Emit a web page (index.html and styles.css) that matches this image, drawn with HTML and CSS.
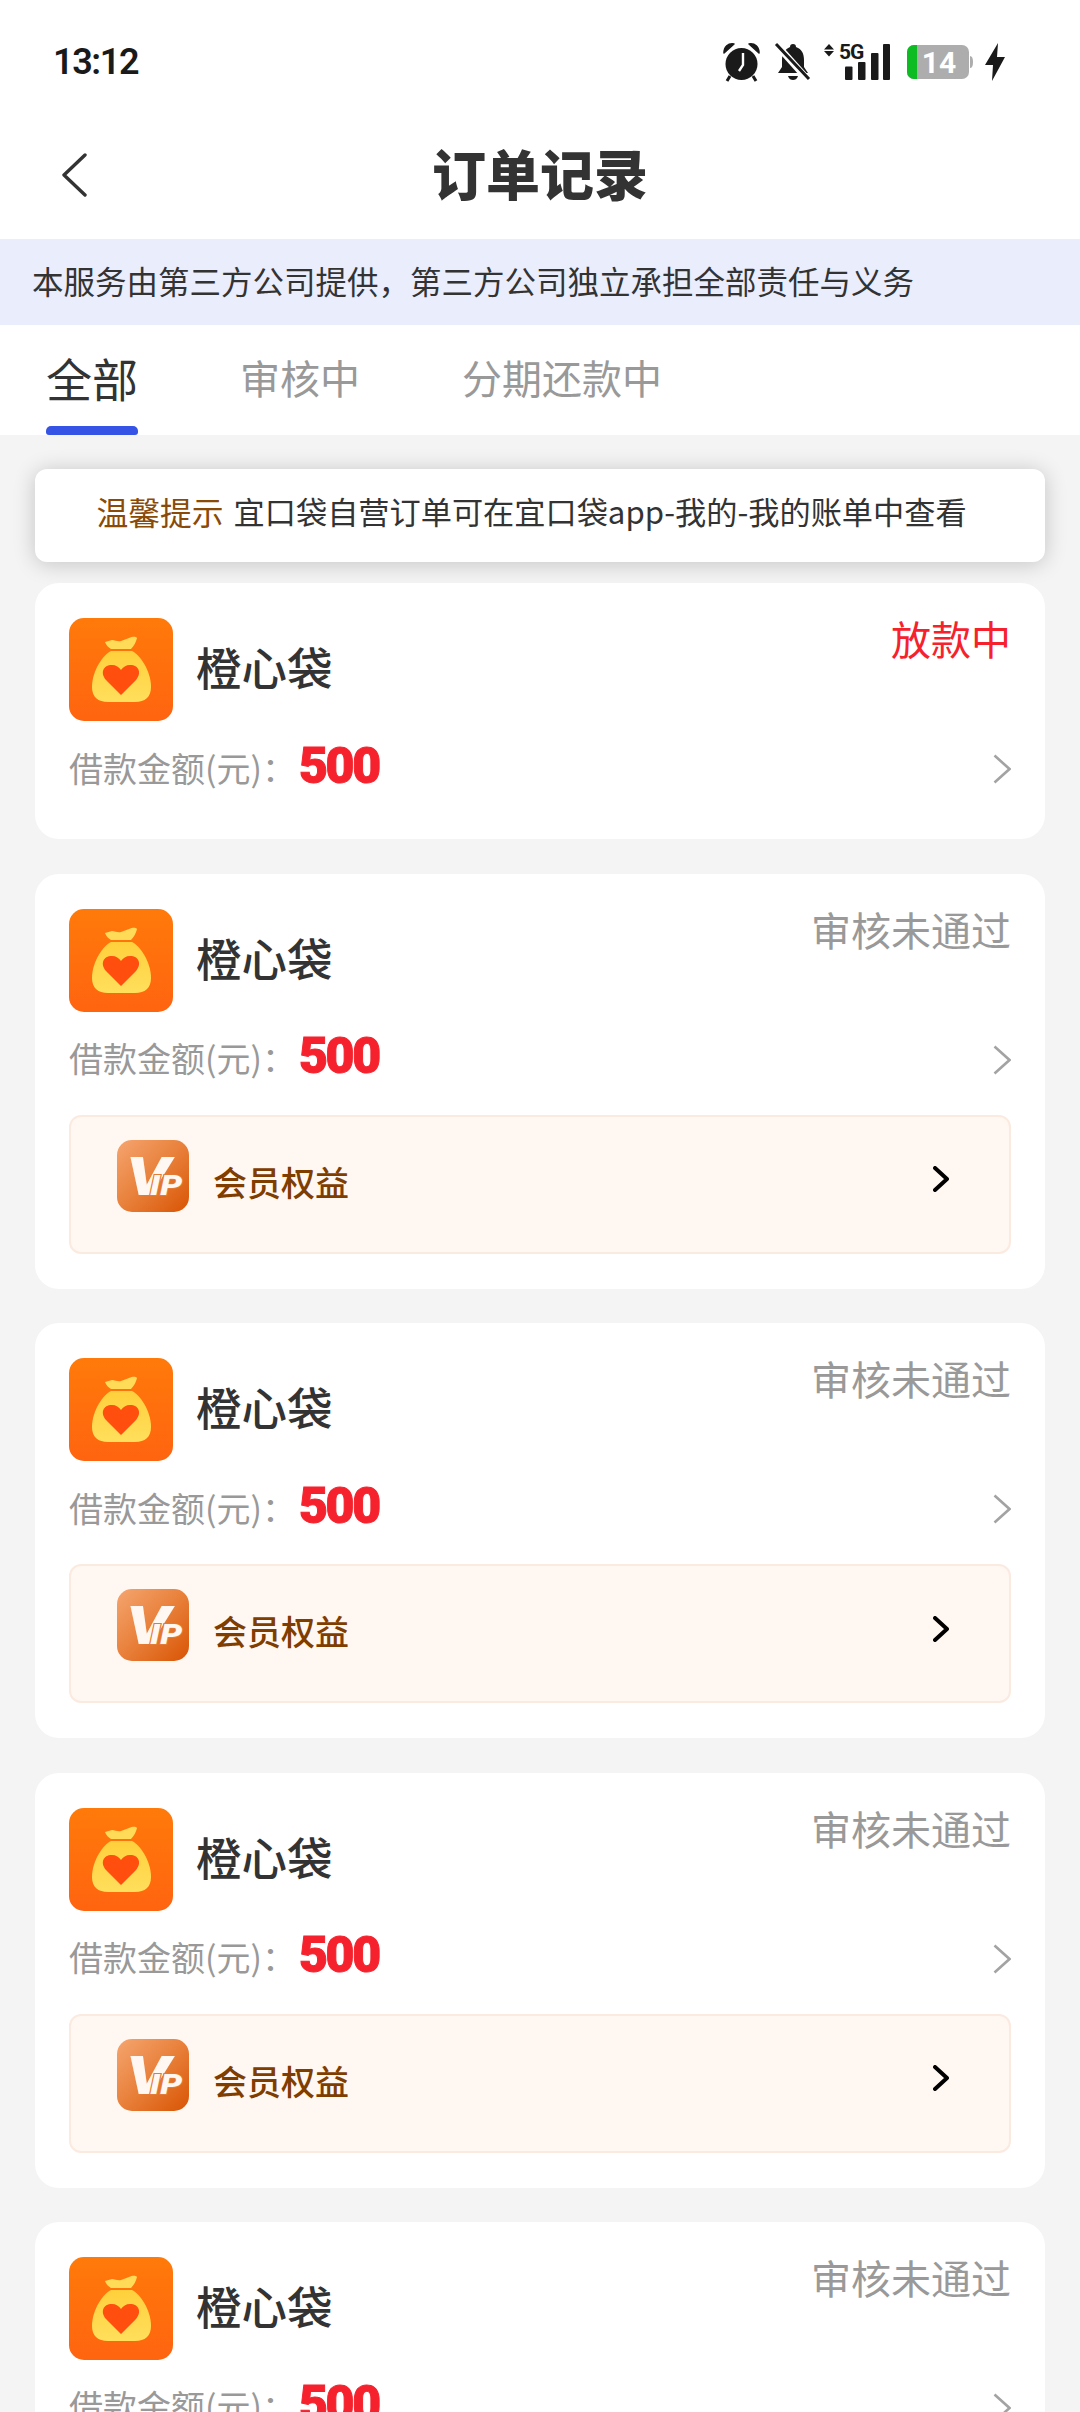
FILE: index.html
```html
<!DOCTYPE html>
<html lang="zh-CN">
<head>
<meta charset="utf-8">
<title>订单记录</title>
<link rel="stylesheet" href="styles.css">
</head>
<body>
<svg class="sprite" aria-hidden="true">
  <defs>
    <linearGradient id="bagBg" x1="0" y1="0" x2="0" y2="1"><stop offset="0" stop-color="#ff7a0a"/><stop offset="1" stop-color="#ff6410"/></linearGradient>
    <linearGradient id="bagFill" x1="0" y1="0" x2="0" y2="1"><stop offset="0" stop-color="#ffd03c"/><stop offset="1" stop-color="#ffdf5c"/></linearGradient>
    <linearGradient id="vipBg" x1="0" y1="0" x2="1" y2="1"><stop offset="0" stop-color="#f5a570"/><stop offset=".5" stop-color="#e8803a"/><stop offset="1" stop-color="#d95404"/></linearGradient>
    <symbol id="bag" viewBox="0 0 104 103">
      <rect width="104" height="103" rx="15" fill="url(#bagBg)"/>
      <path d="M36 24l7-2c3 0 6 2 9 1l8-3c3-1 6-2 8 0-1 4-3 8-6 11H42c-3-2-5-4-6-7z" fill="#ffdb58"/>
      <path d="M42 33h21c7 3 19 19 19 36 0 10-6 15-16 15H39c-10 0-16-5-16-15 0-17 12-33 19-36z" fill="url(#bagFill)"/>
      <path d="M52 77 37 62c-6-7-3-15 6-15 4 0 7 2 9 5 2-3 5-5 9-5 9 0 12 8 6 15z" fill="#ff4e0e"/>
    </symbol>
    <symbol id="chev-gray" viewBox="0 0 18 30"><path d="M1.500 1.500 16.500 15 1.500 28.500" fill="none" stroke="#a3a3a3" stroke-width="2.600"/></symbol>
    <symbol id="chev-black" viewBox="0 0 16 26"><path d="M2 2 14 13 2 24" fill="none" stroke="#000" stroke-width="4" stroke-linecap="round" stroke-linejoin="round"/></symbol>
  </defs>
</svg>

<div class="screen">
  <header class="top">
    <div class="statusbar">
      <span class="time">13:12</span>
      <div class="status-icons">
        <svg class="ic-alarm" viewBox="0 0 37 38"><path d="M1 10C1 4 5 0 11 1L1 10zM36 10c0-6-4-10-10-9l10 9z" fill="#1a1a1a" stroke="#1a1a1a" stroke-width="1.500" stroke-linejoin="round"/><path d="M7 33l-3 5M30 33l3 5" stroke="#1a1a1a" stroke-width="3"/><circle cx="18.500" cy="21" r="16" fill="#1a1a1a"/><path d="M20 10v12l-4 6" fill="none" stroke="#fff" stroke-width="2.400"/></svg>
        <svg class="ic-bell" viewBox="0 0 35 36"><path d="M18 0c2 0 3 1 3 3 6 2 8 7 8 13v7l4 6H3l4-6v-7c0-6 3-11 8-13 0-2 1-3 3-3z" fill="#1a1a1a"/><path d="M13 32h10c-1 3-3 4-5 4s-4-1-5-4z" fill="#1a1a1a"/><path d="M0-1 34 37" stroke="#fff" stroke-width="7"/><path d="M1 0l33 35" stroke="#1a1a1a" stroke-width="3"/></svg>
        <svg class="ic-net" viewBox="0 0 66 36"><path d="M5 0l5 5.500H0zM5 12.500 0 7h10z" fill="#1a1a1a"/><text class="net-text" x="15" y="15">5G</text><rect x="21" y="22.500" width="7.500" height="13.500" rx="1" fill="#1a1a1a"/><rect x="34" y="18" width="7.500" height="18" rx="1" fill="#1a1a1a"/><rect x="47" y="9" width="7.500" height="27" rx="1" fill="#1a1a1a"/><rect x="59" y="0" width="7" height="36" rx="1" fill="#1a1a1a"/></svg>
        <svg class="ic-batt" viewBox="0 0 66 34"><rect x="0" y="0" width="62" height="34" rx="7" fill="#adadad"/><path d="M7 0h3v34H7a7 7 0 0 1-7-7V7a7 7 0 0 1 7-7z" fill="#0dbb22"/><path d="M63 11c2 0 3 2 3 6s-1 6-3 6z" fill="#adadad"/><text class="batt-text" x="32" y="28">14</text></svg>
        <svg class="ic-bolt" viewBox="0 0 20 38"><path d="M13 0 0 22h8L7 38 20 14h-8z" fill="#1a1a1a"/></svg>
      </div>
    </div>
    <nav class="nav">
      <svg class="back" viewBox="0 0 26 44"><path d="M24 2 3 22l21 20" fill="none" stroke="#333" stroke-width="3.400" stroke-linecap="round" stroke-linejoin="round"/></svg>
      <h1 class="title">订单记录</h1>
    </nav>
  </header>

  <div class="banner">本服务由第三方公司提供，第三方公司独立承担全部责任与义务</div>

  <div class="tabs">
    <div class="tab tab-active"><span class="tab-label">全部</span><span class="tab-bar"></span></div>
    <div class="tab"><span class="tab-label">审核中</span></div>
    <div class="tab"><span class="tab-label">分期还款中</span></div>
  </div>

  <main class="content">
    <div class="tip"><span class="tip-key">温馨提示</span><span class="tip-text">宜口袋自营订单可在宜口袋app-我的-我的账单中查看</span></div>

    <div class="list">
      <article class="card card-short">
        <div class="head">
          <svg class="logo"><use href="#bag"/></svg>
          <span class="name">橙心袋</span>
          <span class="status status-red">放款中</span>
        </div>
        <div class="row">
          <span class="label">借款金额(元)：</span><span class="amount">500</span>
          <svg class="chev"><use href="#chev-gray"/></svg>
        </div>
      </article>

      <article class="card">
        <div class="head">
          <svg class="logo"><use href="#bag"/></svg>
          <span class="name">橙心袋</span>
          <span class="status">审核未通过</span>
        </div>
        <div class="row">
          <span class="label">借款金额(元)：</span><span class="amount">500</span>
          <svg class="chev"><use href="#chev-gray"/></svg>
        </div>
        <div class="vip">
          <svg class="vip-logo" viewBox="0 0 72 72"><rect width="72" height="72" rx="15" fill="url(#vipBg)"/><text class="vip-v" x="9" y="55" textLength="44" lengthAdjust="spacingAndGlyphs">V</text><text class="vip-ip" x="33" y="55" textLength="32" lengthAdjust="spacingAndGlyphs">IP</text></svg>
          <span class="vip-text">会员权益</span>
          <svg class="vip-chev"><use href="#chev-black"/></svg>
        </div>
      </article>

      <article class="card">
        <div class="head">
          <svg class="logo"><use href="#bag"/></svg>
          <span class="name">橙心袋</span>
          <span class="status">审核未通过</span>
        </div>
        <div class="row">
          <span class="label">借款金额(元)：</span><span class="amount">500</span>
          <svg class="chev"><use href="#chev-gray"/></svg>
        </div>
        <div class="vip">
          <svg class="vip-logo" viewBox="0 0 72 72"><rect width="72" height="72" rx="15" fill="url(#vipBg)"/><text class="vip-v" x="9" y="55" textLength="44" lengthAdjust="spacingAndGlyphs">V</text><text class="vip-ip" x="33" y="55" textLength="32" lengthAdjust="spacingAndGlyphs">IP</text></svg>
          <span class="vip-text">会员权益</span>
          <svg class="vip-chev"><use href="#chev-black"/></svg>
        </div>
      </article>

      <article class="card">
        <div class="head">
          <svg class="logo"><use href="#bag"/></svg>
          <span class="name">橙心袋</span>
          <span class="status">审核未通过</span>
        </div>
        <div class="row">
          <span class="label">借款金额(元)：</span><span class="amount">500</span>
          <svg class="chev"><use href="#chev-gray"/></svg>
        </div>
        <div class="vip">
          <svg class="vip-logo" viewBox="0 0 72 72"><rect width="72" height="72" rx="15" fill="url(#vipBg)"/><text class="vip-v" x="9" y="55" textLength="44" lengthAdjust="spacingAndGlyphs">V</text><text class="vip-ip" x="33" y="55" textLength="32" lengthAdjust="spacingAndGlyphs">IP</text></svg>
          <span class="vip-text">会员权益</span>
          <svg class="vip-chev"><use href="#chev-black"/></svg>
        </div>
      </article>

      <article class="card">
        <div class="head">
          <svg class="logo"><use href="#bag"/></svg>
          <span class="name">橙心袋</span>
          <span class="status">审核未通过</span>
        </div>
        <div class="row">
          <span class="label">借款金额(元)：</span><span class="amount">500</span>
          <svg class="chev"><use href="#chev-gray"/></svg>
        </div>
      </article>
    </div>
  </main>
</div>
</body>
</html>
```

FILE: styles.css
```css
* { box-sizing: border-box; }
html, body { margin: 0; padding: 0; }
body {
  font-family: "Noto Sans CJK SC", "Noto Sans", sans-serif;
  color: #333;
  background: #f4f4f4;
}
.sprite { position: absolute; width: 0; height: 0; }
.screen { width: 1080px; height: 2412px; overflow: hidden; background: #f4f4f4; }

.top { background: #fff; height: 239px; padding-top: 42px; }
.statusbar {
  display: flex;
  align-items: center;
  justify-content: space-between;
  height: 40px;
  padding: 0 75px 0 53px;
}
.time { font-family: Roboto, sans-serif; font-weight: 600; font-size: 36px; letter-spacing: -1.400px; color: #1a1a1a; line-height: 40px; }
.status-icons { display: flex; align-items: center; }
.status-icons svg { overflow: visible; }
.ic-alarm { width: 37px; height: 38px; }
.ic-bell { width: 35px; height: 36px; margin-left: 15px; }
.ic-net { width: 66px; height: 36px; margin-left: 14px; }
.ic-batt { width: 66px; height: 34px; margin-left: 17px; }
.ic-bolt { width: 20px; height: 38px; margin-left: 12px; }
.net-text { font-family: Roboto, sans-serif; font-weight: 700; font-size: 21px; letter-spacing: -1px; fill: #1a1a1a; }
.batt-text { font-family: Roboto, sans-serif; font-weight: 700; font-size: 30px; fill: #fff; text-anchor: middle; }

.nav {
  display: grid;
  grid-template-columns: 1fr auto 1fr;
  align-items: center;
  padding-top: 52px;
}
.back { grid-column: 1; grid-row: 1; width: 26px; height: 44px; margin-left: 61px; margin-top: 4px; }
.title { grid-column: 2; grid-row: 1; margin: 0; font-size: 54px; font-weight: 900; line-height: 78px; color: #333; }

.banner {
  height: 86px;
  padding-left: 32px;
  background: #eaedfc;
  font-size: 31.500px;
  line-height: 82px;
  color: #333;
  white-space: nowrap;
}

.tabs { display: flex; gap: 102px; height: 110px; padding-left: 46px; background: #fff; }
.tab { display: flex; flex-direction: column; padding-top: 22px; font-size: 40px; color: #999; }
.tab-label { line-height: 60px; white-space: nowrap; }
.tab-active { font-size: 46px; color: #333; }
.tab-bar { display: block; margin-top: auto; height: 9px; border-radius: 5px 5px 3px 3px; background: #3553e4; }

.content { padding: 34px 35px 0; }
.tip {
  display: flex;
  align-items: center;
  justify-content: center;
  gap: 10px;
  height: 93px;
  padding: 0 17px 10px 0;
  border-radius: 12px;
  background: #fff;
  box-shadow: 0 2px 22px rgba(0, 0, 0, .2);
  white-space: nowrap;
}
.tip-key { color: #8a4a08; font-size: 31.800px; }
.tip-text { color: #333; font-size: 31.200px; }

.list { display: flex; flex-direction: column; gap: 34.300px; margin-top: 21px; }
.card { border-radius: 24px; background: #fff; padding: 35px 34px 35px; }
.card-short { margin-bottom: .7px; }
.head { display: flex; align-items: center; }
.logo { width: 104px; height: 103px; flex: none; }
.name { margin-left: 23px; margin-bottom: 7px; font-size: 45.500px; font-weight: 500; line-height: 64px; color: #333; }
.status { align-self: flex-start; margin-left: auto; font-size: 40px; line-height: 40px; color: #999; }
.status-red { color: #f5222d; }

.row { display: flex; align-items: center; height: 59px; padding-bottom: 10px; margin-top: 24px; }
.label { margin-bottom: 4px; font-size: 34px; line-height: 44px; color: #999; white-space: nowrap; }
.amount { margin-left: 3px; margin-bottom: 8px; font-family: Roboto, sans-serif; font-weight: 900; font-size: 50px; line-height: 48px; letter-spacing: -2.400px; color: #f5222d; -webkit-text-stroke: 1px #f5222d; }
.chev { width: 18px; height: 30px; margin-left: auto; margin-bottom: 1px; }

.vip {
  display: flex;
  align-items: center;
  height: 139px;
  margin-top: 20px;
  padding: 0 60px 0 46px;
  border: 2px solid #fbeadf;
  border-radius: 12px;
  background: #fff7f1;
}
.vip-logo { width: 72px; height: 72px; flex: none; margin-bottom: 17px; }
.vip-text { margin-left: 24px; margin-bottom: 6px; font-size: 34px; color: #7f3d00; font-weight: 500; }
.vip-chev { width: 16px; height: 26px; margin-left: auto; margin-bottom: 10px; }
.vip-v { font-family: Roboto, sans-serif; font-weight: 900; font-style: italic; font-size: 54px; fill: #fff7f1; }
.vip-ip { font-family: Roboto, sans-serif; font-weight: 900; font-style: italic; font-size: 28px; fill: #fff7f1; stroke: #e37a35; stroke-width: 2px; paint-order: stroke; }
```
